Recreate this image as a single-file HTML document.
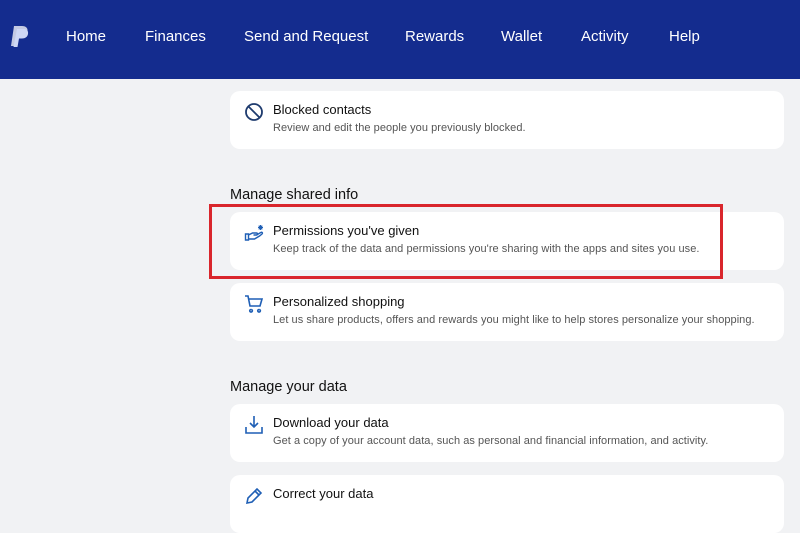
<!DOCTYPE html>
<html><head><style>
*{margin:0;padding:0;box-sizing:border-box}
body{width:800px;height:503px;overflow:hidden;background:#f1f2f4;font-family:"Liberation Sans",sans-serif;position:relative}
.hdr{position:absolute;left:0;top:0;width:800px;height:79px;background:#142c8e}
.nav{position:absolute;top:28px;color:#fff;font-size:15px}
.card{position:absolute;left:230px;width:554px;height:58px;background:#fff;border-radius:10px}
.card .t{position:absolute;left:43px;top:11px;font-size:13px;color:#111}
.card .d{position:absolute;left:43px;top:31px;font-size:11px;color:#555;letter-spacing:.05px}
.card svg{position:absolute;left:14px;top:11px}
.h{position:absolute;left:230px;font-size:14.5px;color:#111}
.red{position:absolute;left:209px;top:204px;width:514px;height:75px;border:3px solid #d9262c}
</style></head><body>
<div class="hdr">
<svg style="position:absolute;left:9px;top:25px" width="22" height="24" viewBox="0 0 22 24"><path d="M5 1h8c4 0 6 2 5.5 5.5C18 10 15 12 11 12H8l-1.5 9H2z" fill="#fff" opacity=".75"/><path d="M8 4h7c3 0 4.5 2 4 5-.5 3-3 4.5-6 4.5h-3L8.5 22H4.5z" fill="#cfd8f5"/></svg>
<span class="nav" style="left:66px">Home</span>
<span class="nav" style="left:145px">Finances</span>
<span class="nav" style="left:244px">Send and Request</span>
<span class="nav" style="left:405px">Rewards</span>
<span class="nav" style="left:501px">Wallet</span>
<span class="nav" style="left:581px">Activity</span>
<span class="nav" style="left:669px">Help</span>
</div>
<div class="card" style="top:91px"><svg width="20" height="20" viewBox="0 0 20 20"><circle cx="10" cy="10" r="8" fill="none" stroke="#1e3b6e" stroke-width="1.8"/><path d="M4.5 4.5l11 11" stroke="#1e3b6e" stroke-width="1.8"/></svg><div class="t">Blocked contacts</div><div class="d">Review and edit the people you previously blocked.</div></div>
<div class="h" style="top:187px">Manage shared info</div>
<div class="card" style="top:212px"><svg width="22" height="20" viewBox="0 0 22 20"><path d="M1.5 11h3v6h-3zM4.5 12l4-2h4c1.2 0 1.2 2 0 2H9.5M4.5 16h6l5-3 2.5-2c1-1 0-2.2-1.2-1.5L12.5 12" fill="none" stroke="#1f5fb5" stroke-width="1.4"/><path d="M16.5 2v5M14 4.5h5M14.7 2.7l3.6 3.6M18.3 2.7l-3.6 3.6" stroke="#1f5fb5" stroke-width="1.1"/></svg><div class="t">Permissions you've given</div><div class="d">Keep track of the data and permissions you're sharing with the apps and sites you use.</div></div>
<div class="card" style="top:283px"><svg width="20" height="20" viewBox="0 0 20 20"><path d="M1 2h3l2 10h10l2-7H5M7 15.5a1.3 1.3 0 1 0 .1 0M15 15.5a1.3 1.3 0 1 0 .1 0" fill="none" stroke="#1f5fb5" stroke-width="1.6"/></svg><div class="t">Personalized shopping</div><div class="d">Let us share products, offers and rewards you might like to help stores personalize your shopping.</div></div>
<div class="h" style="top:379px">Manage your data</div>
<div class="card" style="top:404px"><svg width="20" height="20" viewBox="0 0 20 20"><path d="M10 1v11M6 8l4 4 4-4M2 12v6h16v-6" fill="none" stroke="#1f5fb5" stroke-width="1.6"/></svg><div class="t">Download your data</div><div class="d">Get a copy of your account data, such as personal and financial information, and activity.</div></div>
<div class="card" style="top:475px"><svg width="20" height="20" viewBox="0 0 20 20"><path d="M3 17l1-5L13 3l4 4-9 9z M11 5l4 4" fill="none" stroke="#1f5fb5" stroke-width="1.6"/></svg><div class="t">Correct your data</div></div>
<div class="red"></div>
</body></html>
